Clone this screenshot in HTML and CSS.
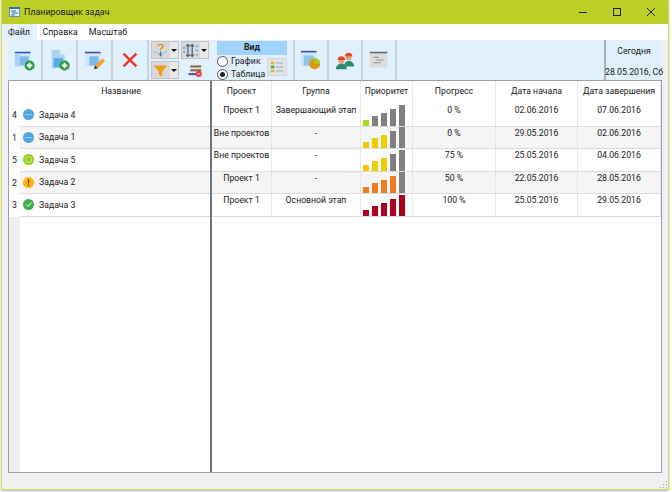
FILE: index.html
```html
<!DOCTYPE html>
<html lang="ru">
<head>
<meta charset="utf-8">
<title>Планировщик задач</title>
<link rel="stylesheet" href="styles.css">
</head>
<body>
<div class="window">
  <header class="titlebar">
    <svg class="app-icon" viewBox="0 0 11 10"><rect x="0.500" y="0.500" width="10" height="9" fill="#dff0fb" stroke="#6a8fb0"/><rect x="0" y="0" width="11" height="2" fill="#3c6fa8"/><path d="M2 4h5M3 6h6M2 8h4" stroke="#3c6fa8" fill="none"/></svg>
    <span class="title">Планировщик задач</span>
    <div class="win-controls">
      <svg class="win-btn" viewBox="0 0 34 24"><path d="M13 12.500h8" stroke="#222" fill="none"/></svg>
      <svg class="win-btn" viewBox="0 0 34 24"><rect x="13.500" y="8.500" width="7" height="7" stroke="#222" fill="none"/></svg>
      <svg class="win-btn" viewBox="0 0 34 24"><path d="M13 8l8 8M21 8l-8 8" stroke="#222" fill="none"/></svg>
    </div>
  </header>
  <nav class="menubar">
    <span class="menu-item active">Файл</span>
    <span class="menu-item">Справка</span>
    <span class="menu-item">Масштаб</span>
  </nav>
  <div class="content">
    <div class="toolbar">
      <button class="tool" type="button">
        <svg viewBox="0 0 24 24"><rect x="1" y="3" width="17" height="2" fill="#3f4fa0"/><rect x="1" y="5" width="17" height="14" fill="#cfe6fa"/><rect x="6" y="8" width="10" height="10" fill="#7db8ea"/><rect x="1" y="5" width="5" height="14" fill="#a8d2f5"/><circle cx="17" cy="18" r="5.500" fill="#2c9c3e"/><path d="M17 15v6M14 18h6" stroke="#fff" stroke-width="2" fill="none"/></svg>
      </button>
      <button class="tool" type="button">
        <svg viewBox="0 0 24 24"><path d="M3 1h9l5 5v15H3z" fill="#a9d3f5"/><path d="M12 1l5 5h-5z" fill="#dceefd"/><rect x="5" y="10" width="10" height="10" fill="#5fa6e6"/><circle cx="17" cy="18" r="5.500" fill="#2c9c3e"/><path d="M17 15v6M14 18h6" stroke="#fff" stroke-width="2" fill="none"/></svg>
      </button>
      <button class="tool" type="button">
        <svg viewBox="0 0 24 24"><rect x="1" y="3" width="17" height="2" fill="#3f4fa0"/><rect x="1" y="5" width="17" height="14" fill="#cfe6fa"/><rect x="6" y="8" width="10" height="10" fill="#7db8ea"/><path d="M11 22l1-4 8-8 3 3-8 8z" fill="#f2a33a"/><path d="M11 22l1-4 3 3z" fill="#333"/></svg>
      </button>
      <button class="tool tool-x" type="button">
        <svg viewBox="0 0 24 24"><path d="M5 5l14 14M19 5L5 19" stroke="#e8382c" stroke-width="2.600" fill="none"/></svg>
      </button>
      <div class="mini-group">
        <div class="mini-col">
          <div class="mini grey">
            <svg class="mini-icon" viewBox="0 0 20 16"><path d="M2 9c4 3 12 3 16 0" stroke="#7fb8e6" fill="none"/><path d="M10 9v6M8 13h4" stroke="#2a62b0" fill="none"/><path d="M7 3c0-3 6-3 6 0 0 2-3 2-3 4M10 8v1" stroke="#d8931c" stroke-width="1.600" fill="none"/></svg>
            <span class="drop"></span>
          </div>
          <div class="mini grey">
            <svg class="mini-icon" viewBox="0 0 20 16"><path d="M2 2h16l-6 7v6l-4-2V9z" fill="#f39a16"/></svg>
            <span class="drop"></span>
          </div>
        </div>
        <div class="mini-col">
          <div class="mini grey">
            <svg class="mini-icon" viewBox="0 0 20 16"><path d="M7 1v14M5 3l2-2 2 2M5 13l2 2 2-2" stroke="#44607a" stroke-width="1.400" fill="none"/><path d="M12 1v14M10 3l2-2 2 2M10 13l2 2 2-2" stroke="#44607a" stroke-width="1.400" fill="none"/><path d="M16 3h3M16 8h3M16 13h3M1 5h3M1 10h3" stroke="#6fb3e8" stroke-width="2" fill="none"/></svg>
            <span class="drop"></span>
          </div>
          <div class="mini plain">
            <svg class="mini-icon" viewBox="0 0 20 16"><rect x="5" y="2" width="13" height="2.500" fill="#8a6a48"/><rect x="5" y="6.500" width="13" height="2.500" fill="#8a6a48"/><rect x="3" y="11" width="12" height="2.500" fill="#5a4fb8"/><circle cx="15" cy="12" r="3.600" fill="#e8384c"/><path d="M13 12h4" stroke="#fff" fill="none"/></svg>
          </div>
        </div>
      </div>
      <section class="view-group">
        <div class="view-head">Вид</div>
        <div class="view-body">
          <div class="radios">
            <label class="radio"><span class="radio-dot"></span>График</label>
            <label class="radio"><span class="radio-dot on"></span>Таблица</label>
          </div>
          <div class="list-btn">
            <svg viewBox="0 0 16 16"><rect x="1" y="2" width="4" height="3" fill="#e8b820"/><rect x="1" y="6.500" width="4" height="3" fill="#50a050"/><rect x="1" y="11" width="4" height="3" fill="#e8b820"/><path d="M7 3.500h8M7 8h8M7 12.500h8" stroke="#8aa4c0" fill="none"/></svg>
          </div>
        </div>
      </section>
      <button class="tool tool-b" type="button">
        <svg viewBox="0 0 24 24"><rect x="1" y="2" width="17" height="2" fill="#3f4fa0"/><rect x="1" y="4" width="17" height="15" fill="#cfe6fa"/><rect x="4" y="7" width="11" height="11" fill="#8fc3ee"/><circle cx="16" cy="16" r="6" fill="#d89a12"/><path d="M16 16V10a6 6 0 0 1 6 6z" fill="#a8cc30"/></svg>
      </button>
      <button class="tool tool-b" type="button">
        <svg viewBox="0 0 24 24"><circle cx="8" cy="13" r="3.200" fill="#e8a070"/><path d="M4 12a4 4 0 0 1 8 0z" fill="#e8442c"/><path d="M2 22c0-4 3-6 6-6s6 2 6 6z" fill="#2f8a70"/><circle cx="16" cy="9" r="3.200" fill="#e8a070"/><path d="M12 8a4 4 0 0 1 8 0z" fill="#e8442c"/><path d="M11 19c0-4 2-6 5-6s6 2 6 6z" fill="#2f8a70"/></svg>
      </button>
      <button class="tool tool-b" type="button">
        <svg viewBox="0 0 24 24"><rect x="2" y="3" width="19" height="2" fill="#666"/><rect x="2" y="5" width="19" height="15" fill="#dcdcdc"/><path d="M6 9h6M9 12h8M6 15h8" stroke="#888" fill="none"/></svg>
      </button>
      <div class="today">
        <span>Сегодня</span>
        <span>28.05.2016, Сб</span>
      </div>
    </div>
    <div class="tables">
      <div class="left-pane">
        <div class="left-head"><span class="corner"></span><span class="name-head">Название</span></div>
        <div class="left-row"><span class="num">4</span><span class="name"><svg class="st" viewBox="0 0 11 11"><circle cx="5.500" cy="5.500" r="5.500" fill="#4ea6dc"/><path d="M2.500 5.500h1M5 5.500h1M7.500 5.500h1" stroke="#fff" fill="none"/></svg>Задача 4</span></div>
        <div class="left-row alt"><span class="num">1</span><span class="name"><svg class="st" viewBox="0 0 11 11"><circle cx="5.500" cy="5.500" r="5.500" fill="#4ea6dc"/><path d="M2.500 5.500h1M5 5.500h1M7.500 5.500h1" stroke="#fff" fill="none"/></svg>Задача 1</span></div>
        <div class="left-row"><span class="num">5</span><span class="name"><svg class="st" viewBox="0 0 11 11"><circle cx="5.500" cy="5.500" r="5.500" fill="#8fcf1e"/><circle cx="5.500" cy="5.500" r="3" stroke="#d8f2a0" stroke-width="1.200" stroke-dasharray="2 1" fill="none"/></svg>Задача 5</span></div>
        <div class="left-row alt"><span class="num">2</span><span class="name"><svg class="st" viewBox="0 0 11 11"><circle cx="5.500" cy="5.500" r="5.500" fill="#ffb400"/><path d="M5.500 2v4.500M5.500 7.500v1.500" stroke="#5a3c00" stroke-width="1.200" fill="none"/></svg>Задача 2</span></div>
        <div class="left-row"><span class="num">3</span><span class="name"><svg class="st" viewBox="0 0 11 11"><circle cx="5.500" cy="5.500" r="5.500" fill="#3fae49"/><path d="M3 5.500l2 2 3.500-4" stroke="#fff" fill="none"/></svg>Задача 3</span></div>
        <div class="left-rest"><span class="rest-num"></span></div>
      </div>
      <div class="right-pane">
        <div class="right-head">
          <span class="c-project">Проект</span><span class="c-group">Группа</span><span class="c-prio">Приоритет</span><span class="c-prog">Прогресс</span><span class="c-start">Дата начала</span><span class="c-end">Дата завершения</span>
        </div>
        <div class="right-row">
          <span class="c-project">Проект 1</span><span class="c-group">Завершающий этап</span>
          <span class="c-prio bars"><i class="b1 lime"></i><i class="b2"></i><i class="b3"></i><i class="b4"></i><i class="b5"></i></span>
          <span class="c-prog">0 %</span><span class="c-start">02.06.2016</span><span class="c-end">07.06.2016</span>
        </div>
        <div class="right-row alt">
          <span class="c-project">Вне проектов</span><span class="c-group">-</span>
          <span class="c-prio bars"><i class="b1 yellow"></i><i class="b2 yellow"></i><i class="b3 yellow"></i><i class="b4"></i><i class="b5"></i></span>
          <span class="c-prog">0 %</span><span class="c-start">29.05.2016</span><span class="c-end">02.06.2016</span>
        </div>
        <div class="right-row">
          <span class="c-project">Вне проектов</span><span class="c-group">-</span>
          <span class="c-prio bars"><i class="b1 yellow"></i><i class="b2 yellow"></i><i class="b3 yellow"></i><i class="b4"></i><i class="b5"></i></span>
          <span class="c-prog">75 %</span><span class="c-start">25.05.2016</span><span class="c-end">04.06.2016</span>
        </div>
        <div class="right-row alt">
          <span class="c-project">Проект 1</span><span class="c-group">-</span>
          <span class="c-prio bars"><i class="b1 orange"></i><i class="b2 orange"></i><i class="b3 orange"></i><i class="b4 orange"></i><i class="b5"></i></span>
          <span class="c-prog">50 %</span><span class="c-start">22.05.2016</span><span class="c-end">28.05.2016</span>
        </div>
        <div class="right-row">
          <span class="c-project">Проект 1</span><span class="c-group">Основной этап</span>
          <span class="c-prio bars"><i class="b1 red"></i><i class="b2 red"></i><i class="b3 red"></i><i class="b4 red"></i><i class="b5 red"></i></span>
          <span class="c-prog">100 %</span><span class="c-start">25.05.2016</span><span class="c-end">29.05.2016</span>
        </div>
      </div>
    </div>
    <div class="statusbar"><svg class="grip" viewBox="0 0 9 9"><path d="M7 1h1v1H7zM4 4h1v1H4zM7 4h1v1H7zM1 7h1v1H1zM4 7h1v1H4zM7 7h1v1H7z" fill="#a8a8a8"/></svg></div>
  </div>
</div>
</body>
</html>
```
FILE: styles.css
```css
* { box-sizing: border-box; }
html, body { margin: 0; height: 100%; background: #fff; overflow: hidden; }
body {
  font-family: Roboto, sans-serif;
  font-size: 8.700px;
  color: #1a1a1a;
  padding: 0 3px 2px 1px;
}
.window {
  height: 100%;
  display: flex;
  flex-direction: column;
  border: 1px solid #d5e05c;
  border-top: 0;
  background: #f0f0f0;
  box-shadow: 0 1px 2px #b8b8b8;
}
.titlebar {
  height: 24px;
  flex: none;
  display: flex;
  align-items: center;
  background: #bccf26;
  padding-left: 7px;
}
.app-icon { width: 11px; height: 10px; margin-right: 4px; }
.title { font-size: 8.900px; color: #1c1c1c; }
.win-controls { margin-left: auto; display: flex; }
.win-btn { width: 34px; height: 24px; display: block; }
.menubar {
  height: 16px;
  flex: none;
  display: flex;
  background: #fff;
}
.menu-item {
  padding: 0 5.500px;
  line-height: 16px;
  font-size: 8.900px;
}
.menu-item.active { background: #e4f1fb; padding: 0 7px 0 6px; }
.content { flex: 1; display: flex; flex-direction: column; min-height: 0; padding: 0 6px; }
.toolbar {
  height: 41px;
  flex: none;
  display: flex;
  background: #e1f0fd;
  border-bottom: 1px solid #9aa0a6;
}
.tool {
  width: 35px;
  border: 0;
  border-right: 2px solid #c9d2da;
  background: transparent;
  padding: 0;
  display: flex;
  align-items: center;
  justify-content: center;
}
.tool svg { width: 22px; height: 22px; }
.tool-x { width: 36px; }
.tool-b { width: 34px; }
.mini-group { width: 62px; display: flex; gap: 2px; padding: 1px 0 0 2px; }
.mini-col { display: flex; flex-direction: column; gap: 2px; width: 28px; }
.mini { height: 18px; display: flex; align-items: center; }
.mini.grey { background: #d9d9d9; border: 1px solid #c4c4c4; }
.mini-icon { width: 17px; height: 15px; flex: none; }
.mini.plain .mini-icon { margin-left: 5px; }
.drop {
  margin-left: 1px;
  background: #e8e8e8;
  width: 8px;
  height: 16px;
  display: flex;
}
.drop::before {
  content: "";
  margin: auto;
  border: 3px solid transparent;
  border-top: 3px solid #111;
  border-bottom: 0;
}
.view-group { width: 84px; padding: 0 6px; border-right: 2px solid #c9d2da; display: flex; flex-direction: column; }
.view-head {
  height: 14px;
  margin-top: 1px;
  background: #9fd3fb;
  font-weight: 700;
  text-align: center;
  line-height: 13px;
}
.view-body { display: flex; flex: 1; position: relative; }
.radios { display: flex; flex-direction: column; gap: 1px; }
.radio { display: flex; align-items: center; gap: 3px; height: 12px; white-space: nowrap; }
.radio-dot { width: 11px; height: 11px; border: 1px solid #555; border-radius: 50%; background: #fff; display: flex; }
.radio-dot.on::before { content: ""; width: 5px; height: 5px; margin: auto; border-radius: 50%; background: #222; }
.list-btn { position: absolute; right: 0; top: 3px; width: 20px; height: 18px; background: #dfe3e6; border: 1px solid #d0d6da; display: flex; align-items: center; justify-content: center; }
.list-btn svg { width: 14px; height: 14px; }
.today {
  margin-left: auto;
  width: 58px;
  border-left: 2px solid #a9b0b6;
  display: flex;
  flex-direction: column;
  justify-content: space-between;
  align-items: center;
  padding: 6px 0 3px;
  white-space: nowrap;
}
.tables {
  flex: 1;
  min-height: 0;
  display: flex;
  background: #fff;
  border: 1px solid #9aa0a6;
  border-top: 0;
}
.left-pane { width: 203px; flex: none; display: flex; flex-direction: column; border-right: 2px solid #6e7680; }
.left-head { height: 23px; flex: none; display: flex; }
.corner { width: 11px; flex: none; }
.name-head { flex: 1; text-align: center; line-height: 20px; padding-left: 12px; }
.left-row { height: 22.500px; flex: none; display: flex; align-items: center; }
.num { width: 11px; flex: none; text-align: center; }
.name { flex: 1; height: 100%; display: flex; align-items: center; gap: 5px; padding-left: 3px; border-bottom: 1px solid #dcdcdc; }
.left-row.alt .name { background: #f5f5f5; }
.st { width: 11px; height: 11px; flex: none; }
.left-rest { flex: 1; display: flex; }
.rest-num { width: 11px; background: #efefef; }
.right-pane { flex: 1; min-width: 0; display: flex; flex-direction: column; }
.right-head { height: 23px; flex: none; display: flex; line-height: 20px; text-align: center; }
.right-row { height: 22.500px; flex: none; display: flex; text-align: center; line-height: 13px; border-bottom: 1px solid #dcdcdc; }
.right-row.alt { background: #f5f5f5; }
.right-row > span, .right-head > span { border-right: 1px solid #e8e8e8; white-space: nowrap; }
.c-project { width: 60px; flex: none; }
.c-group { width: 89px; flex: none; }
.c-prio { width: 52px; flex: none; }
.c-prog { width: 83px; flex: none; }
.c-start { width: 82px; flex: none; }
.c-end { flex: 1; }
.bars { display: flex; align-items: flex-end; gap: 3px; padding-left: 2px; }
.bars i { width: 6px; background: #808080; display: block; }
.bars .b1 { height: 6px; }
.bars .b2 { height: 10px; }
.bars .b3 { height: 13px; }
.bars .b4 { height: 17px; }
.bars .b5 { height: 21px; }
.bars .lime { background: #a4e01c; }
.bars .yellow { background: #f0cc00; }
.bars .orange { background: #f07c20; }
.bars .red { background: #b00020; }
.statusbar { height: 16px; flex: none; display: flex; justify-content: flex-end; align-items: flex-end; margin-right: -6px; }
.grip { width: 9px; height: 9px; display: block; }
```
